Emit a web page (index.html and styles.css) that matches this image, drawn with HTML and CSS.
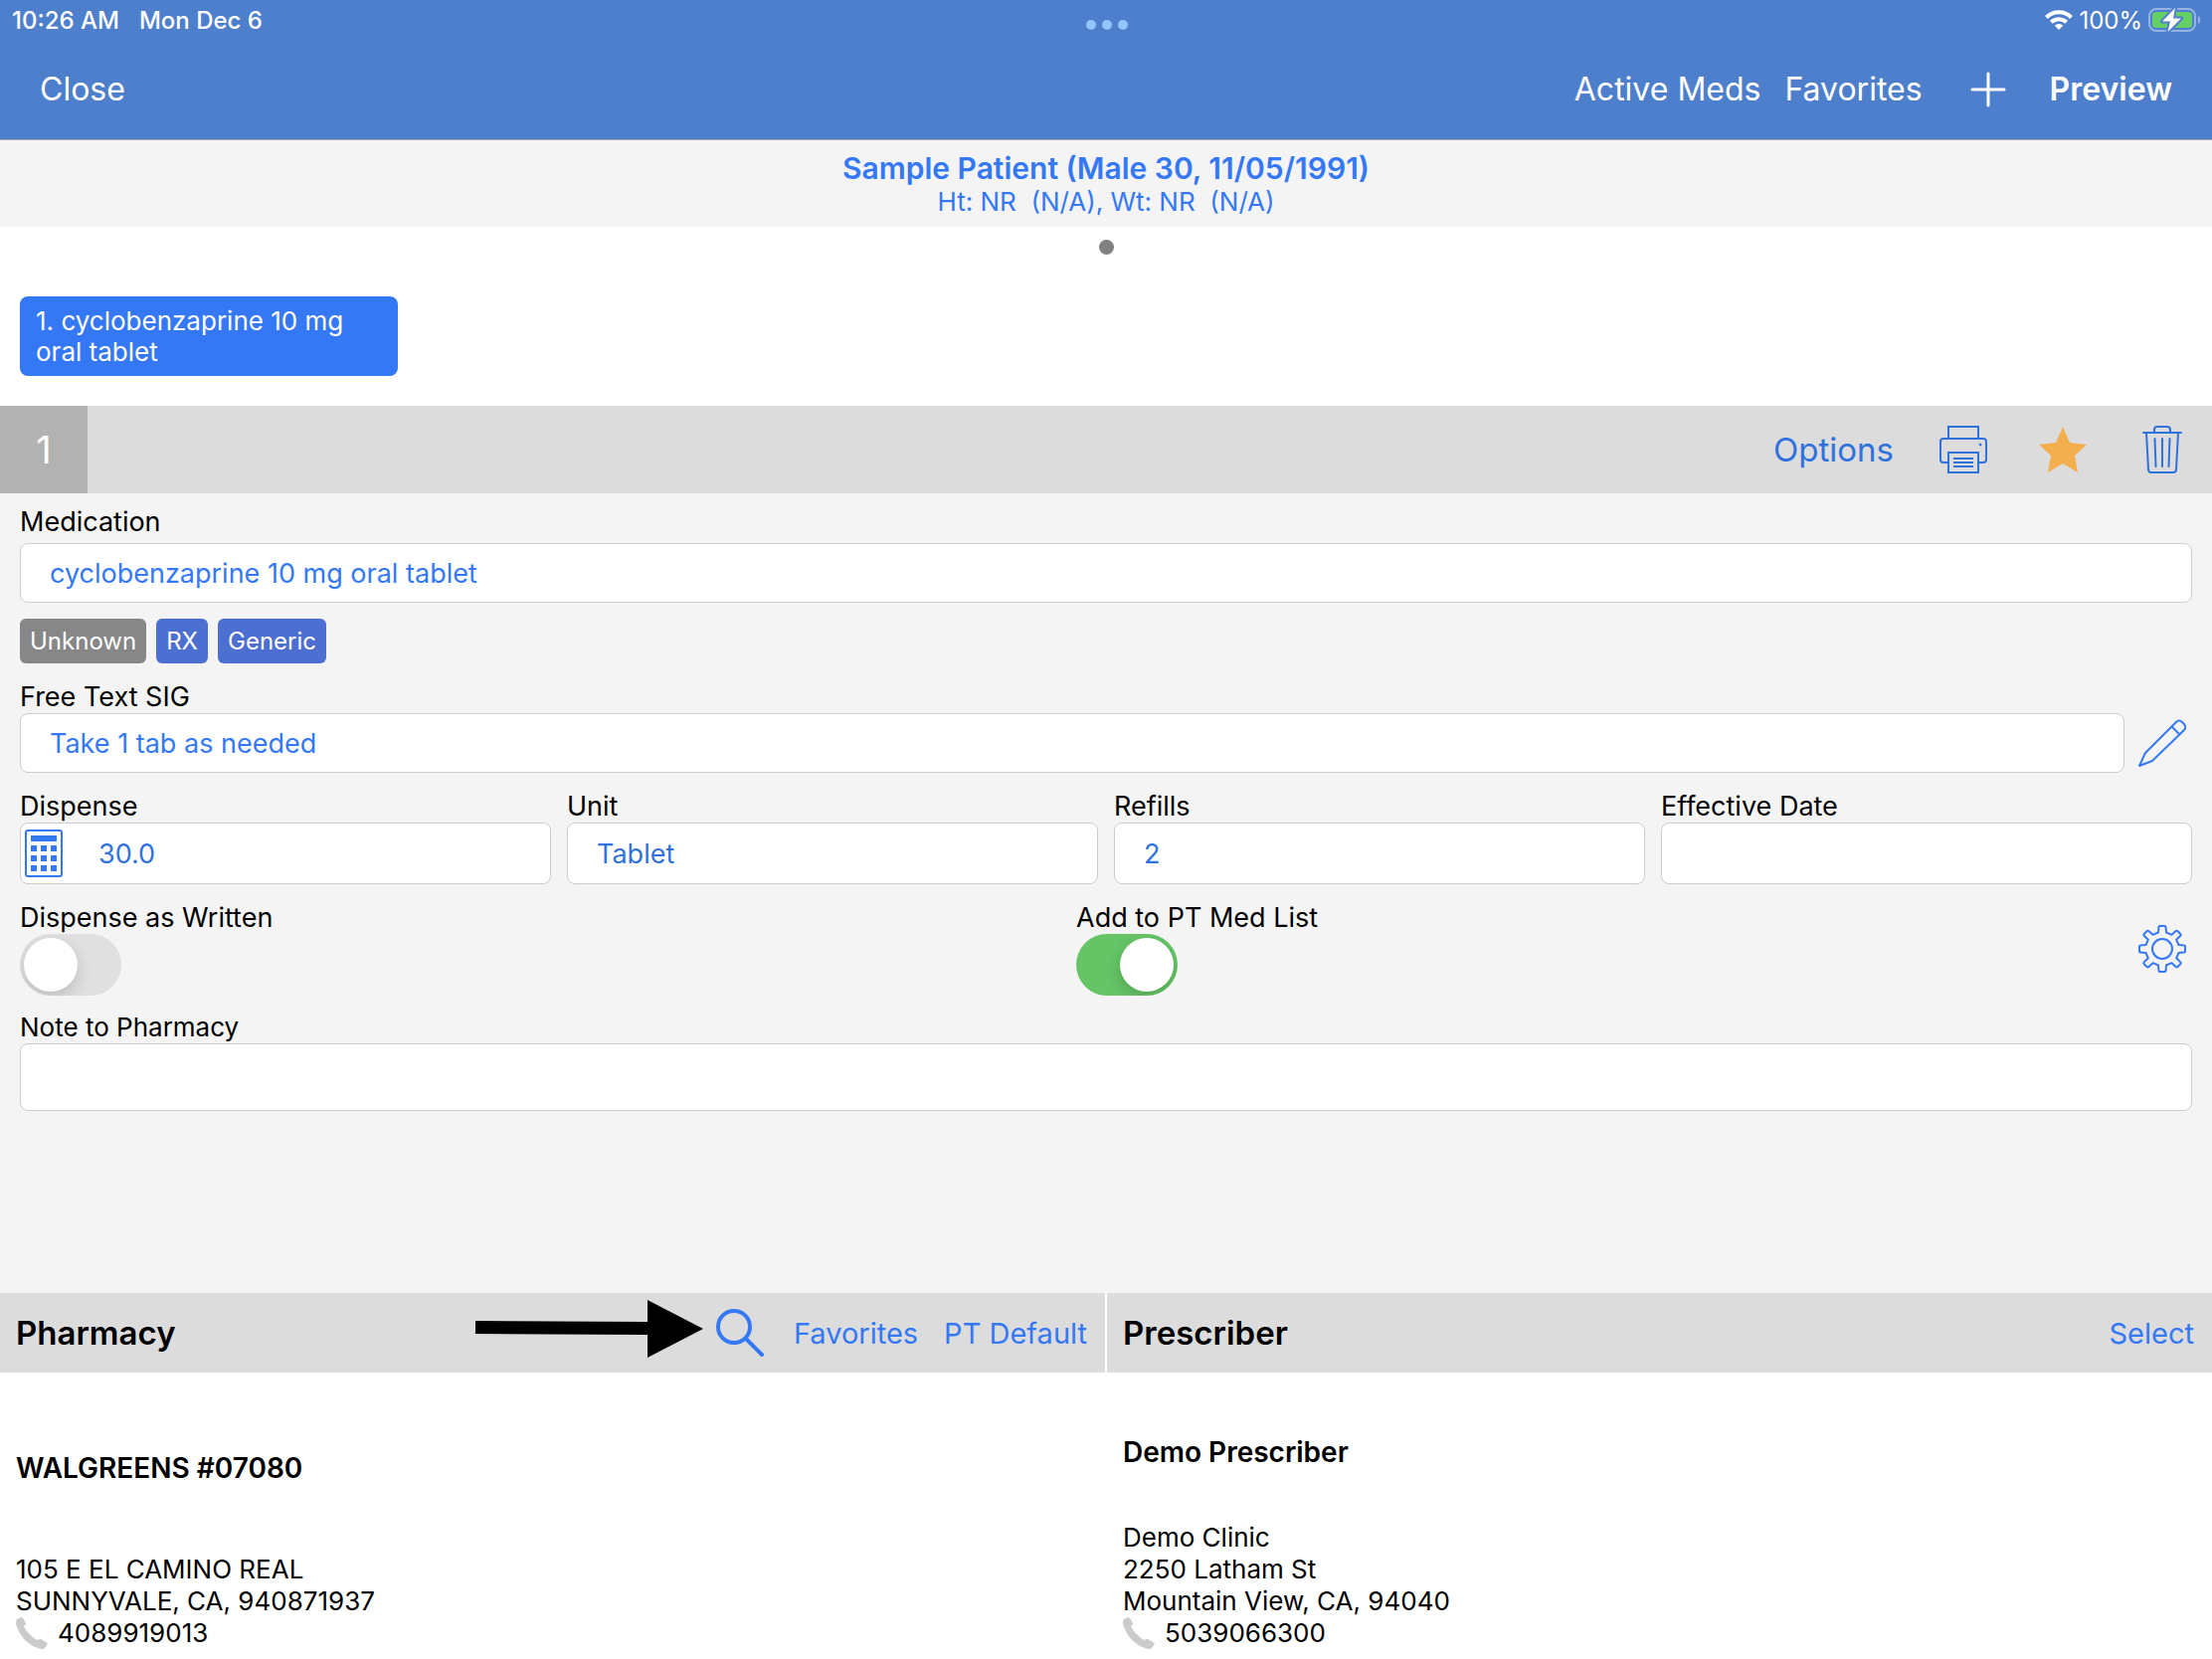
FILE: index.html
```html
<!DOCTYPE html>
<html lang="en">
<head>
<meta charset="utf-8">
<meta name="viewport" content="width=device-width, initial-scale=1">
<title>New Prescription</title>
<link rel="stylesheet" href="styles.css">
</head>
<body>
<header class="topbar">
  <div class="status">
    <div class="status-left"><span>10:26 AM</span><span>Mon Dec 6</span></div>
    <div class="multitask"><i></i><i></i><i></i></div>
    <div class="status-right">
      <svg class="wifi" width="28" height="20" viewBox="0 0 28 20" fill="none" stroke="#fff" stroke-width="4">
        <path d="M1.5 7.5a17.5 17.5 0 0 1 25 0"/>
        <path d="M6.3 12.3a11 11 0 0 1 15.4 0"/>
        <path d="M14 20l-4.2-4.3a6 6 0 0 1 8.4 0z" fill="#fff" stroke="none"/>
      </svg>
      <span>100%</span>
      <svg class="battery" width="54" height="26" viewBox="0 0 54 26">
        <rect x="1" y="2" width="46" height="22" rx="7" fill="none" stroke="#94b3e0" stroke-width="2"/>
        <path d="M50 9c3 1 3 7 0 8z" fill="#94b3e0"/>
        <rect x="4" y="5" width="40" height="16" rx="4" fill="#65cf66"/>
        <path d="M27 1L14 14.500h8L19.500 25 33 11.500h-8z" fill="#fff" stroke="#4e7fcc" stroke-width="4" stroke-linejoin="round" paint-order="stroke"/>
      </svg>
    </div>
  </div>
  <nav class="navbar">
    <button type="button" class="nav-btn">Close</button>
    <div class="nav-actions">
      <button type="button" class="nav-btn">Active Meds</button>
      <button type="button" class="nav-btn">Favorites</button>
      <button type="button" class="nav-btn nav-add" aria-label="Add">
        <svg width="36" height="36" viewBox="0 0 36 36" stroke="#fff" stroke-width="3" stroke-linecap="round"><path d="M18 2v32M2 18h32"/></svg>
      </button>
      <button type="button" class="nav-btn strong">Preview</button>
    </div>
  </nav>
</header>

<section class="patient">
  <h1>Sample Patient (Male 30, 11/05/1991)</h1>
  <p>Ht: NR&nbsp; (N/A), Wt: NR&nbsp; (N/A)</p>
</section>

<section class="med-tabs">
  <span class="page-dot"></span>
  <button type="button" class="med-tab">1. cyclobenzaprine 10 mg oral tablet</button>
</section>

<section class="rx-bar">
  <span class="rx-number">1</span>
  <div class="rx-actions">
    <button type="button" class="rx-options">Options</button>
    <button type="button" class="icon-btn" aria-label="Print">
      <svg width="48" height="48" viewBox="0 0 48 48" fill="none" stroke="#2f72de" stroke-width="2">
        <path d="M9 13V1h30v12"/>
        <path d="M9 37H4q-3 0-3-3V16q0-3 3-3h40q3 0 3 3v18q0 3-3 3h-5"/>
        <rect x="9" y="27" width="30" height="20"/>
        <path d="M14 33h20M14 37h20M14 41h20"/>
        <circle cx="41" cy="19" r="1" fill="#2f72de" stroke-width="1"/>
      </svg>
    </button>
    <button type="button" class="icon-btn" aria-label="Favorite">
      <svg width="48" height="48" viewBox="0 0 48 48"><path fill="#f3ae4e" d="M24 1l7 16 17 2-12 11 3 17-15-9-15 9 3-17L0 19l17-2z"/></svg>
    </button>
    <button type="button" class="icon-btn" aria-label="Delete">
      <svg width="48" height="48" viewBox="0 0 48 48" fill="none" stroke="#2f72de" stroke-width="2" stroke-linecap="round">
        <path d="M5 7h38M16 7V4q0-3 3-3h10q3 0 3 3v3"/>
        <path d="M8 7l2 37q0 3 3 3h22q3 0 3-3l2-37"/>
        <path d="M16.500 13l1 28M24 13v28M31.500 13l-1 28"/>
      </svg>
    </button>
  </div>
</section>

<form class="rx-form">
  <div class="field med">
    <label for="medication">Medication</label>
    <input id="medication" type="text" value="cyclobenzaprine 10 mg oral tablet">
  </div>
  <div class="badges">
    <span class="badge unknown">Unknown</span>
    <span class="badge">RX</span>
    <span class="badge">Generic</span>
  </div>
  <div class="field sig">
    <label for="sig">Free Text SIG</label>
    <div class="sig-row">
      <input id="sig" type="text" value="Take 1 tab as needed">
      <button type="button" class="icon-btn" aria-label="Edit SIG">
        <svg width="48" height="48" viewBox="0 0 48 48" fill="none" stroke="#3478f6" stroke-width="2" stroke-linejoin="round">
          <path d="M1 47l6-13L38 3q3-3 6 0l1 1q4 4 1 7L14 42z"/>
          <path d="M33.500 7.500l7.500 7.500"/>
        </svg>
      </button>
    </div>
  </div>
  <div class="quad">
    <div class="field">
      <label for="dispense">Dispense</label>
      <div class="calc-box">
        <svg width="38" height="48" viewBox="0 0 38 48" fill="#3478f6" aria-hidden="true">
          <rect x="1" y="1" width="36" height="46" rx="2" fill="none" stroke="#3478f6" stroke-width="2"/>
          <rect x="6" y="6" width="26" height="6"/>
          <path d="M6 16h6v6H6zM16 16h6v6h-6zM26 16h6v6h-6zM6 26h6v6H6zM16 26h6v6h-6zM26 26h6v6h-6zM6 36h6v6H6zM16 36h6v6h-6zM26 36h6v6h-6z"/>
        </svg>
        <input id="dispense" type="text" value="30.0">
      </div>
    </div>
    <div class="field">
      <label for="unit">Unit</label>
      <input id="unit" type="text" value="Tablet">
    </div>
    <div class="field">
      <label for="refills">Refills</label>
      <input id="refills" type="text" value="2">
    </div>
    <div class="field">
      <label for="effective">Effective Date</label>
      <input id="effective" type="text">
    </div>
  </div>
  <div class="switches">
    <div class="field">
      <label for="daw">Dispense as Written</label>
      <input id="daw" class="switch" type="checkbox" role="switch">
    </div>
    <div class="field">
      <label for="ptlist">Add to PT Med List</label>
      <input id="ptlist" class="switch" type="checkbox" role="switch" checked>
    </div>
    <button type="button" class="icon-btn" aria-label="Settings">
      <svg width="48" height="48" viewBox="0 0 48 48" fill="none" stroke="#3478f6" stroke-width="2" stroke-linejoin="round">
        <circle cx="24" cy="24" r="10"/>
        <path d="M20.500 2q0-1 1-1h5q1 0 1 1l.5 5.500 5.500 2.300L37.500 6.200q1-.8 2 0l2.800 2.800q.8 1 0 1.800L38.200 14.800l2.300 5.200 5.500.5q1 0 1 1v5q0 1-1 1l-5.500.5-2.300 5.200 4.100 4.200q.8 1 0 1.800l-2.800 2.800q-1 .8-2 0L33.500 38.200 28 40.500l-.5 5.500q0 1-1 1h-5q-1 0-1-1L20 40.500 14.500 38.200 10.500 42q-1 .8-2 0L5.700 39.200q-.8-.8 0-1.800L9.800 33.200 7.500 28 2 27.500q-1 0-1-1v-5q0-1 1-1L7.500 20l2.300-5.200L5.700 10.800q-.8-.8 0-1.800L8.500 6.200q1-.8 2 0l4 3.600L20 7.500z"/>
      </svg>
    </button>
  </div>
  <div class="field note">
    <label for="note">Note to Pharmacy</label>
    <textarea id="note" rows="1"></textarea>
  </div>
</form>

<div class="parties">
  <section class="party">
    <header class="party-head">
      <h2>Pharmacy</h2>
      <div class="party-actions">
        <svg class="arrow" width="230" height="60" viewBox="0 0 230 60" aria-hidden="true"><path d="M0 22l173 1V1l56 29-56 29V36L0 35z"/></svg>
        <button type="button" class="search-btn" aria-label="Search pharmacies">
          <svg width="48" height="48" viewBox="0 0 48 48" fill="none" stroke="#3478f6" stroke-width="4" stroke-linecap="round"><circle cx="18" cy="18" r="16"/><path d="M30 30l16 16"/></svg>
        </button>
        <button type="button" class="link-btn">Favorites</button>
        <button type="button" class="link-btn">PT Default</button>
      </div>
    </header>
    <div class="party-body pharmacy-body">
      <h3>WALGREENS #07080</h3>
      <address>
        <span>105 E EL CAMINO REAL</span>
        <span>SUNNYVALE, CA, 940871937</span>
        <span class="phone">
          <svg width="32" height="32" viewBox="0 0 32 32"><path fill="#cbcbcb" d="M1 2l4-2q1 0 2 1l3 5q.5 1-1 2l-1 1q3 7 13 14l3-1q1-.5 2 .5l5 3q1 1 .5 2l-3 4q-2 1-5 0Q6 26 0 7 0 3 1 2z"/></svg>
          4089919013</span>
      </address>
    </div>
  </section>
  <section class="party">
    <header class="party-head">
      <h2>Prescriber</h2>
      <div class="party-actions">
        <button type="button" class="link-btn">Select</button>
      </div>
    </header>
    <div class="party-body prescriber-body">
      <h3>Demo Prescriber</h3>
      <address>
        <span>Demo Clinic</span>
        <span>2250 Latham St</span>
        <span>Mountain View, CA, 94040</span>
        <span class="phone">
          <svg width="32" height="32" viewBox="0 0 32 32"><path fill="#cbcbcb" d="M1 2l4-2q1 0 2 1l3 5q.5 1-1 2l-1 1q3 7 13 14l3-1q1-.5 2 .5l5 3q1 1 .5 2l-3 4q-2 1-5 0Q6 26 0 7 0 3 1 2z"/></svg>
          5039066300</span>
      </address>
    </div>
  </section>
</div>
</body>
</html>
```
FILE: styles.css
```css
* {
  box-sizing: border-box;
}

body {
  margin: 0;
  min-height: 100vh;
  display: flex;
  flex-direction: column;
  background: #fff;
  color: #000;
  font-family: Inter, "Liberation Sans", sans-serif;
  font-size: 27px;
}

h1, h2, h3, p {
  margin: 0;
  font-weight: 400;
}

button {
  margin: 0;
  padding: 0;
  border: 0;
  background: none;
  color: inherit;
  font: inherit;
  cursor: pointer;
}

svg {
  display: block;
  flex: none;
}

/* Top bar */
.topbar {
  background: #4e7fcc;
  border-bottom: 1px solid #a6a6a6;
  color: #fff;
}

.status {
  display: grid;
  grid-template-columns: 1fr auto 1fr;
  align-items: center;
  height: 40px;
  padding: 0 10px 0 12px;
  font-size: 24px;
  font-weight: 500;
}

.status-left {
  display: flex;
  gap: 20px;
}

.multitask {
  display: flex;
  gap: 6px;
  padding-top: 10px;
}

.multitask i {
  width: 10px;
  height: 10px;
  border-radius: 50%;
  background: #92c4ff;
}

.status-right {
  display: flex;
  justify-content: flex-end;
  align-items: center;
  gap: 6px;
  font-weight: 400;
}

.navbar {
  display: flex;
  justify-content: space-between;
  align-items: center;
  height: 100px;
  padding: 0 40px;
}

.nav-btn {
  font-size: 32px;
  line-height: 40px;
}

.nav-actions {
  display: flex;
  align-items: center;
  gap: 24px;
}

.nav-add {
  padding: 0 20px 0 24px;
}

.strong {
  font-weight: 600;
}

/* Patient banner */
.patient {
  padding: 10px 20px 9px;
  background: #f4f4f4;
  color: #3478f6;
  text-align: center;
}

.patient h1 {
  font-size: 30px;
  font-weight: 600;
  line-height: 36px;
}

.patient p {
  font-size: 26px;
  line-height: 32px;
}

/* Medication tabs */
.med-tabs {
  display: flex;
  flex-direction: column;
  padding: 13px 20px 30px;
}

.page-dot {
  align-self: center;
  width: 15px;
  height: 15px;
  border-radius: 50%;
  background: #808080;
}

.med-tab {
  width: 380px;
  margin-top: 42px;
  padding: 9px 16px;
  border-radius: 8px;
  background: #3478f6;
  color: #fff;
  font-size: 26px;
  line-height: 31px;
  text-align: left;
}

/* Prescription bar */
.rx-bar {
  display: flex;
  justify-content: space-between;
  height: 88px;
  background: #dcdcdc;
}

.rx-number {
  display: flex;
  align-items: center;
  justify-content: center;
  width: 88px;
  background: #b2b2b2;
  color: #fff;
  font-size: 38px;
}

.rx-actions {
  display: flex;
  align-items: center;
  gap: 52px;
  padding-right: 26px;
  color: #2f72de;
}

.rx-options {
  font-size: 33px;
  margin-right: -6px;
}

/* Form */
.rx-form {
  flex: 1;
  padding: 13px 20px 20px;
  background: #f4f4f4;
}

.field {
  display: flex;
  flex-direction: column;
}

.field label {
  line-height: 32px;
}

.field input[type="text"],
.field textarea {
  width: 100%;
  height: 62px;
  margin: 0;
  padding: 0 29px;
  border: 1px solid #ccc;
  border-radius: 8px;
  background: #fff;
  color: #3478f6;
  font: inherit;
}

.med input[type="text"],
.sig input[type="text"] {
  height: 60px;
}

.med {
  gap: 5px;
}

.badges {
  display: flex;
  gap: 10px;
  padding: 16px 0 18px;
}

.badge {
  padding: 0 10px;
  border-radius: 6px;
  background: #4d6fd2;
  color: #fff;
  font-size: 24px;
  line-height: 45px;
}

.badge.unknown {
  background: #878787;
}

.sig-row {
  display: flex;
  align-items: center;
  gap: 14px;
  padding-right: 6px;
}

.quad {
  display: grid;
  grid-template-columns: repeat(4, 1fr);
  gap: 16px;
  padding: 18px 0;
}

.calc-box {
  display: flex;
  align-items: center;
  height: 62px;
  padding-left: 4px;
  border: 1px solid #ccc;
  border-radius: 8px;
  background: #fff;
}

.calc-box input[type="text"] {
  height: 60px;
  padding: 0 36px;
  border: 0;
}

.quad input[type="text"] {
  color: #2f72de;
}

.switches {
  display: grid;
  grid-template-columns: 1fr 1fr 60px;
  align-items: center;
}

.switches .icon-btn {
  justify-self: center;
}

.switch {
  appearance: none;
  display: flex;
  align-items: center;
  width: 102px;
  height: 62px;
  margin: 0;
  padding: 0 4px;
  overflow: hidden;
  border-radius: 31px;
  background: #e0e0e0;
}

.switch::before {
  content: "";
  width: 54px;
  height: 54px;
  border-radius: 50%;
  background: #fff;
  box-shadow: 0 6px 16px rgba(0, 0, 0, 0.16);
}

.switch:checked {
  justify-content: flex-end;
  background: #65c466;
}

.note {
  padding-top: 16px;
}

.note label {
  font-size: 26px;
}

.field textarea {
  height: 68px;
  padding: 16px 29px;
  resize: none;
}

/* Pharmacy and prescriber */
.parties {
  display: grid;
  grid-template-columns: 1fr 1fr;
  gap: 2px;
}

.party-head {
  display: flex;
  justify-content: space-between;
  align-items: center;
  height: 80px;
  padding: 0 18px 0 16px;
  background: #dcdcdc;
}

.party-head h2 {
  font-size: 33px;
  font-weight: 600;
}

.party-actions {
  display: flex;
  align-items: center;
}

.arrow {
  margin: 0 12px 8px 0;
}

.search-btn {
  margin-right: 30px;
}

.link-btn {
  color: #3478f6;
  font-size: 29px;
}

.link-btn + .link-btn {
  margin-left: 26px;
}

.party-body {
  padding: 0 16px 10px;
}

.party-body h3 {
  font-size: 28px;
  font-weight: 600;
  line-height: 32px;
}

.pharmacy-body {
  padding-top: 80px;
}

.prescriber-body {
  padding-top: 64px;
}

.party address {
  display: flex;
  flex-direction: column;
  font-size: 26px;
  font-style: normal;
  line-height: 32px;
}

.pharmacy-body address {
  padding-top: 70px;
}

.prescriber-body address {
  padding-top: 54px;
}

.phone {
  display: flex;
  gap: 10px;
}
```
